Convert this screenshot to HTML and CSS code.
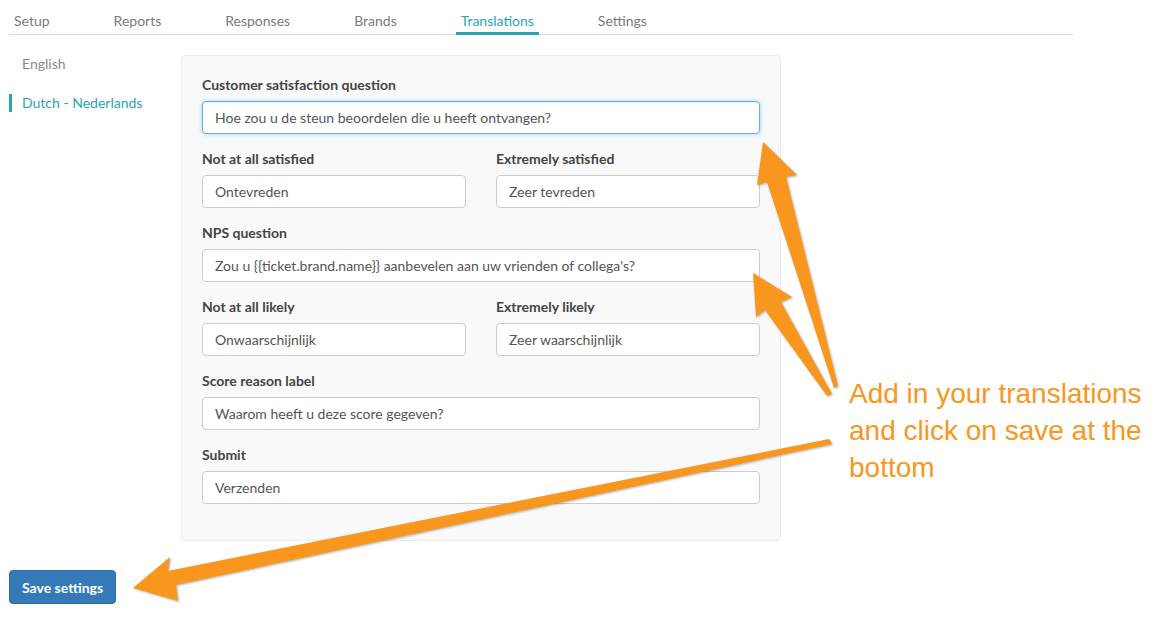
FILE: index.html
```html
<!DOCTYPE html>
<html lang="en">
<head>
  <meta charset="UTF-8" />
  <title>Translations</title>
  <meta name="viewport" content="width=device-width, initial-scale=1.0"/>
  <link rel="stylesheet" href="styles.css">
</head>
<body>
  <nav class="tabs">
    <a class="tab">Setup</a>
    <a class="tab">Reports</a>
    <a class="tab">Responses</a>
    <a class="tab">Brands</a>
    <a class="tab active">Translations</a>
    <a class="tab">Settings</a>
  </nav>

  <div class="main">
    <ul class="languages">
      <li class="lang">English</li>
      <li class="lang active">Dutch - Nederlands</li>
    </ul>

    <form class="panel">
      <div class="field">
        <label for="csat">Customer satisfaction question</label>
        <input type="text" id="csat" class="focused" value="Hoe zou u de steun beoordelen die u heeft ontvangen?" />
      </div>
      <div class="row">
        <div class="field">
          <label for="csatLow">Not at all satisfied</label>
          <input type="text" id="csatLow" value="Ontevreden" />
        </div>
        <div class="field">
          <label for="csatHigh">Extremely satisfied</label>
          <input type="text" id="csatHigh" value="Zeer tevreden" />
        </div>
      </div>
      <div class="field">
        <label for="nps">NPS question</label>
        <input type="text" id="nps" value="Zou u {{ticket.brand.name}} aanbevelen aan uw vrienden of collega's?" />
      </div>
      <div class="row">
        <div class="field">
          <label for="npsLow">Not at all likely</label>
          <input type="text" id="npsLow" value="Onwaarschijnlijk" />
        </div>
        <div class="field">
          <label for="npsHigh">Extremely likely</label>
          <input type="text" id="npsHigh" value="Zeer waarschijnlijk" />
        </div>
      </div>
      <div class="field">
        <label for="reason">Score reason label</label>
        <input type="text" id="reason" value="Waarom heeft u deze score gegeven?" />
      </div>
      <div class="field">
        <label for="submit">Submit</label>
        <input type="text" id="submit" value="Verzenden" />
      </div>
    </form>
  </div>

  <button class="save" type="button">Save settings</button>

  <!-- screenshot annotation -->
  <svg class="arrows" width="1154" height="625" viewBox="0 0 1154 625">
    <polygon points="763,142 797,175 786,177 838,386 834,388 767,182 757,185" />
    <polygon points="753,273 792,297 781,302 832,394 827,396 765,310 756,317" />
    <polygon points="133,588 170,557 168,571 829,439 832,444 176,585 178,601" />
  </svg>
  <div class="note">Add in your translations<br>and click on save at the<br>bottom</div>
</body>
</html>
```

FILE: styles.css
```css
:root {
  --teal: #2aa3b7;
  --text: #555555;
  --label: #444444;
  --border: #cccccc;
  --panel-bg: #f9f9f9;
  --orange: #f8961e;
}
* {
  box-sizing: border-box;
}
body {
  font-family: 'Lato', 'Open Sans', sans-serif;
  font-size: 14px;
  color: var(--text);
  background: #fff;
  margin: 0;
  position: relative;
  height: 625px;
  overflow: hidden;
}
.tabs {
  display: flex;
  gap: 54px;
  margin: 0 81px 0 9px;
  border-bottom: 1px solid #dddddd;
}
.tab {
  display: block;
  padding: 11px 5px 1px;
  line-height: 20px;
  color: #7a7a7a;
  border-bottom: 3px solid transparent;
  margin-bottom: -1px;
  cursor: pointer;
}
.tab.active {
  color: var(--teal);
  border-bottom-color: var(--teal);
}
.main {
  display: flex;
  align-items: flex-start;
  margin: 20px 0 0 9px;
}
.languages {
  list-style: none;
  margin: 0;
  padding: 0;
  width: 172px;
}
.lang {
  line-height: 18px;
  padding-left: 10px;
  border-left: 3px solid transparent;
  margin-bottom: 21px;
  color: #8a8a8a;
}
.lang.active {
  color: var(--teal);
  border-left-color: var(--teal);
}
.panel {
  width: 600px;
  background: var(--panel-bg);
  border: 1px solid #ececec;
  border-radius: 4px;
  padding: 20px 20px 20px;
}
.field {
  margin-bottom: 16px;
}
.row {
  display: grid;
  grid-template-columns: 1fr 1fr;
  gap: 30px;
}
label {
  display: block;
  font-weight: 700;
  line-height: 18px;
  color: var(--label);
  margin-bottom: 7px;
}
input {
  display: block;
  width: 100%;
  height: 33px;
  font-family: inherit;
  font-size: 14px;
  color: var(--text);
  background: #fff;
  border: 1px solid var(--border);
  border-radius: 4px;
  padding: 0 12px;
  outline: none;
}
input.focused {
  border-color: #66afe9;
  box-shadow: inset 0 1px 1px rgba(0, 0, 0, 0.075), 0 0 4px rgba(102, 175, 233, 0.6);
}
.save {
  display: block;
  margin: 29px 0 0 9px;
  height: 34px;
  padding: 0 12px;
  font-family: inherit;
  font-size: 14px;
  font-weight: 700;
  color: #fff;
  background: #337ab7;
  border: 1px solid #2e6da4;
  border-radius: 4px;
  cursor: pointer;
}
.arrows {
  position: absolute;
  top: 0;
  left: 0;
  pointer-events: none;
}
.arrows polygon {
  fill: var(--orange);
  filter: drop-shadow(1px 1px 1px rgba(0, 0, 0, 0.3));
}
.note {
  position: absolute;
  left: 849px;
  top: 375px;
  font-family: 'Liberation Sans', Arial, sans-serif;
  font-size: 28px;
  line-height: 37px;
  color: var(--orange);
}
```
